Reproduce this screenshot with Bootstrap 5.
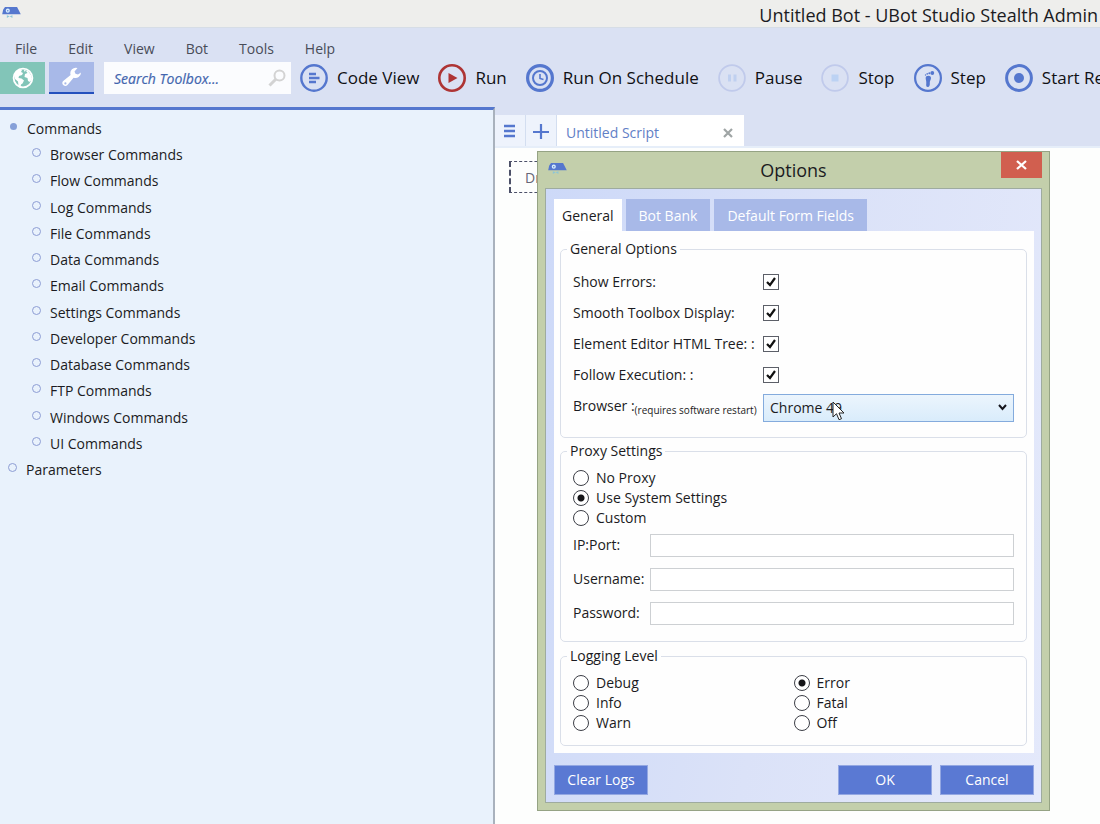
<!DOCTYPE html>
<html lang="en">
<head>
<meta charset="utf-8">
<meta name="viewport" content="width=device-width, initial-scale=1">
<title>Untitled Bot - UBot Studio Stealth Admin</title>
<link rel="stylesheet" href="https://cdn.jsdelivr.net/npm/bootstrap@5.3.0/dist/css/bootstrap.min.css">
<style>
:root { --blue: #5577ce; --soft: #a8b9e8; --green: #c3cfab; }
body { font-family: "Open Sans", "Noto Sans", sans-serif; font-size: 14px; line-height: 20px; color: #1b1b22; background: #fdfefd; }
button { border: 0; padding: 0; background: none; color: inherit; }
svg { display: block; flex: none; }
.titlebar { height: 28px; background: #eeeeec; border-bottom: 1px solid #d6dde6; padding-right: 2px; }
.titlebar h1 { font-size: 18px; line-height: 30px; margin: 0; }
.topbar { background: #dae1f3; }
.menus { padding: 11px 15px 3px; gap: 31px; color: #484c58; }
.tools { height: 45px; padding-bottom: 13px; }
.mode-btn { width: 45px; height: 32px; }
.mode-globe { background: #82c5b8; }
.mode-wrench { background: var(--soft); border-bottom: 2px solid #2450bd; margin-left: 4px; }
.searchbox { width: 187px; height: 32px; margin: 0 9px 0 10px; background: #fbfcfe; padding: 0 5px 0 10px; }
.searchbox input { border: 0; background: none; width: 100%; min-width: 0; padding: 2px 0 0; font-style: italic; outline: 0; }
.searchbox input::placeholder { color: #4265ae; opacity: 1; -webkit-text-stroke: .2px #4265ae; }
.actions { gap: 19px; font-size: 17px; color: #101014; }
.actions button { gap: 9px; height: 32px; }
.toolbox { width: 45%; background: #e9f2fc; border-top: 3px solid var(--blue); border-right: 2px solid #a9b2bd; padding: 6px 0 0 8px; }
.tree ul, .tree { list-style: none; margin: 0; padding: 0; }
.tree .kids { display: grid; grid-auto-rows: 1fr; height: 315px; padding-left: 24px; }
.tree a { color: #1b1b22; text-decoration: none; line-height: 26px; display: flex; gap: 8px; }
.dot { width: 9px; height: 9px; border: 1px solid #8d9dd4; border-radius: 50%; margin: 6px 1px 0 0; }
.dot-open { width: 7px; height: 7px; margin: 7px 2px 0; border: 0; background: #86a0d8; }
.tabstrip { background: #dae1f3; padding-top: 8px; border-bottom: 2px solid #e6eef9; }
.tab-mini { width: 31px; height: 31px; background: #eef3fc; border-right: 1px solid #d3def0; }
.tab-doc { width: 187px; height: 31px; background: #fff; color: #6280c6; padding: 4px 11px 0 9px; }
.dropzone { width: 120px; height: 32px; border: 2px dashed #4c5068; border-width: 1px 1px 1px 2px; margin: 13px 14px; padding: 6px 14px; color: #667; }
.dialog-win { position: absolute; left: 537px; top: 151px; width: 513px; background: var(--green); border: 1px solid #95a384; padding: 0 7px 7px; }
.dialog-head { height: 36px; position: relative; }
.dialog-head h2 { font-size: 18px; line-height: 37px; margin: 0; }
.dialog-icon { position: absolute; left: 3px; top: 10px; }
.close-btn { position: absolute; right: 0; top: 0; width: 41px; height: 26px; background: #d15f4f; }
.dialog-main { border: 1px solid #9eab9f; background: linear-gradient(100deg, #cdd9f8, #dbe2f8 50%, #e4e9fb); padding: 10px 7px 7px 8px; }
.opt-tabs { gap: 4px; }
.opt-tabs button { height: 32px; background: var(--soft); color: #fff; padding: 2px 13px 0; }
.opt-tabs button.active { background: #fff; color: #1b1b22; padding: 2px 8px 0; }
.opt-panel { background: #fefefe; padding: 7px 7px 7px 6px; }
fieldset { border: 1px solid #dadfe9; border-radius: 5px; padding: 6px 12px 11px; }
.fs-proxy { margin-top: 2px; }
.fs-log { margin-top: 3px; padding-bottom: 12px; }
legend { float: none; width: auto; font-size: 14px; line-height: 22px; margin: 0 0 0 -6px; padding: 0 3px; }
.opt-row { display: grid; grid-template-columns: 190px 1fr; height: 31px; align-items: center; }
.opt-row.opt-browser { height: 36px; }
.opt-row small { font-size: 10px; vertical-align: -3px; }
input[type=checkbox] { appearance: none; width: 16px; height: 16px; margin: 0; border: 1px solid #5c5f68; background: #fff url("data:image/svg+xml,%3Csvg xmlns='http://www.w3.org/2000/svg' viewBox='0 0 14 14'%3E%3Cpath d='M3 7l3 3 5-7' fill='none' stroke='%23111' stroke-width='2.2'/%3E%3C/svg%3E") center/14px; }
input[type=radio] { appearance: none; width: 16px; height: 16px; margin: 0 7px 0 0; border: 1px solid #3c3e46; border-radius: 50%; background: #fff; }
input[type=radio]:checked { background: radial-gradient(circle, #151518 3px, #fff 4px); }
.choice { display: flex; align-items: center; height: 20px; }
.picker { position: relative; }
.picker select { display: block; width: 100%; height: 28px; appearance: none; border: 1px solid #84abdd; border-radius: 0; padding: 0 6px; color: #1b1b22; background: linear-gradient(#ecf5fd, #d9ecfb); }
.picker .chev { position: absolute; right: 7px; top: 10px; pointer-events: none; }
.picker .pointer { position: absolute; left: 69px; top: 7px; pointer-events: none; }
.cred { display: grid; grid-template-columns: 77px 1fr; height: 34px; align-items: center; }
.cred input { height: 23px; min-width: 0; border: 1px solid #cdd0d3; background: #fff; border-radius: 0; }
.cmd-btn { width: 94px; height: 30px; background: #5a79d3; border: 1px solid #93a7e2; color: #fff; }
</style>
</head>
<body class="vh-100 d-flex flex-column overflow-hidden">
<svg width="0" height="0" class="position-absolute" aria-hidden="true">
  <symbol id="bot" viewBox="0 0 20 14"><path d="M3 1h13l4 8H0l1-5z" fill="#5577ce"/><circle cx="6" cy="5" r="2.2" fill="#d9efff"/><circle cx="6" cy="5" r=".8" fill="#5577ce"/><path d="M5 10v3l3-2 3 2v-3l-3 1z" fill="#8cc6d8"/></symbol>
</svg>
<header>
  <div class="titlebar d-flex justify-content-between">
    <svg width="22" height="16" class="mt-1"><use href="#bot" x="2" y="2" width="19" height="13"/></svg>
    <h1 class="fw-normal text-nowrap">Untitled Bot - UBot Studio Stealth Admin</h1>
  </div>
  <div class="topbar">
    <nav class="menus d-flex" aria-label="Main menu">
      <button>File</button><button>Edit</button><button>View</button><button>Bot</button><button>Tools</button><button>Help</button>
    </nav>
    <div class="tools d-flex overflow-hidden">
      <button class="mode-btn mode-globe d-flex align-items-center justify-content-center flex-shrink-0" aria-label="Browser">
        <svg width="22" height="22" viewBox="0 0 22 22"><circle cx="11" cy="11" r="9.4" fill="none" stroke="#fff" stroke-width="1.8"/><path d="M2 8c1-3 3-5 6-6l2 1-1 2 2 1-1 2-3 1-.5 2 3 .5 2.500 2-1.500 3-1.500 1-.5 3-2-2-.5-4L3 12zM12 3l4 1 3 4 1 4-2 3-2-1-.5-3-3-1 .5-3 2.500-1-1.500-2-2 .5z" fill="#fff"/></svg>
      </button>
      <button class="mode-btn mode-wrench d-flex align-items-center justify-content-center flex-shrink-0" aria-label="Toolbox">
        <svg width="20" height="20" viewBox="0 0 20 20"><path d="M19 5.500a5.500 5.500 0 0 1-7.400 5.200L5.500 18a3 3 0 0 1-4.600-3.800l7.700-6.300A5.500 5.500 0 0 1 15.500 1l-3 3.500 1 2.200 2.500.7z" fill="#fff"/><circle cx="3.400" cy="16.400" r="1.100" fill="#a8b9e8"/></svg>
      </button>
      <div class="searchbox d-flex align-items-center flex-shrink-0">
        <input type="text" placeholder="Search Toolbox..." aria-label="Search Toolbox">
        <svg width="18" height="18" viewBox="0 0 18 18" fill="none" stroke="#d3d3d3"><circle cx="11.500" cy="6.500" r="5" stroke-width="2"/><path d="M8 10l-6.500 6.500" stroke-width="3"/></svg>
      </div>
      <div class="actions d-flex text-nowrap">
        <button class="d-flex align-items-center"><svg width="28" height="28" viewBox="0 0 28 28" fill="none" stroke="#5577ce" stroke-width="2.400"><circle cx="14" cy="14" r="12.700"/><path d="M9 10h7M9 14h10.500M9 18h7"/></svg>Code View</button>
        <button class="d-flex align-items-center"><svg width="28" height="28" viewBox="0 0 28 28"><circle cx="14" cy="14" r="12.700" fill="none" stroke="#ae3434" stroke-width="2.600"/><path d="M10.500 9l9 5-9 5z" fill="#ae3434"/></svg>Run</button>
        <button class="d-flex align-items-center"><svg width="28" height="28" viewBox="0 0 28 28" fill="none" stroke="#5577ce"><circle cx="14" cy="14" r="12.400" stroke-width="3.200"/><circle cx="14" cy="14" r="7" stroke-width="2"/><path d="M14 10v4.500l3.500 1" stroke-width="1.600"/></svg>Run On Schedule</button>
        <button class="d-flex align-items-center"><svg width="28" height="28" viewBox="0 0 28 28"><circle cx="14" cy="14" r="12.900" fill="none" stroke="#c0caeb" stroke-width="1.800"/><path d="M10 10.500h3v7h-3zM15.500 10.500h3v7h-3z" fill="#bfd0f0"/></svg>Pause</button>
        <button class="d-flex align-items-center"><svg width="28" height="28" viewBox="0 0 28 28"><circle cx="14" cy="14" r="12.900" fill="none" stroke="#c0caeb" stroke-width="1.800"/><path d="M10.500 10.500h7v7h-7z" fill="#bcd2f3"/></svg>Stop</button>
        <button class="d-flex align-items-center"><svg width="28" height="28" viewBox="0 0 28 28"><circle cx="14" cy="14" r="12.900" fill="none" stroke="#5577ce" stroke-width="2.200"/><path d="M12 12.500c2-1.500 5-1 5 1.500 0 2-1.500 3-1.200 5 .2 2-.3 4-2 4s-1.800-1.500-1.500-4c.2-3-1.300-4.500-.3-6.500z" fill="#5577ce"/><g fill="#5577ce"><circle cx="18.300" cy="9" r="1.900"/><circle cx="15.300" cy="9.200" r="1"/><circle cx="13.200" cy="9.900" r=".8"/><circle cx="11.500" cy="11" r=".7"/></g></svg>Step</button>
        <button class="d-flex align-items-center"><svg width="28" height="28" viewBox="0 0 28 28"><circle cx="14" cy="14" r="12.400" fill="none" stroke="#5577ce" stroke-width="3"/><circle cx="14" cy="14" r="5" fill="#5577ce"/></svg>Start Recording</button>
      </div>
    </div>
  </div>
</header>

<main class="d-flex flex-grow-1">
  <aside class="toolbox flex-shrink-0">
    <ul class="tree">
      <li><a href="#"><span class="dot dot-open"></span>Commands</a>
        <ul class="kids">
          <li><a href="#"><span class="dot"></span>Browser Commands</a></li>
          <li><a href="#"><span class="dot"></span>Flow Commands</a></li>
          <li><a href="#"><span class="dot"></span>Log Commands</a></li>
          <li><a href="#"><span class="dot"></span>File Commands</a></li>
          <li><a href="#"><span class="dot"></span>Data Commands</a></li>
          <li><a href="#"><span class="dot"></span>Email Commands</a></li>
          <li><a href="#"><span class="dot"></span>Settings Commands</a></li>
          <li><a href="#"><span class="dot"></span>Developer Commands</a></li>
          <li><a href="#"><span class="dot"></span>Database Commands</a></li>
          <li><a href="#"><span class="dot"></span>FTP Commands</a></li>
          <li><a href="#"><span class="dot"></span>Windows Commands</a></li>
          <li><a href="#"><span class="dot"></span>UI Commands</a></li>
        </ul>
      </li>
      <li><a href="#"><span class="dot"></span>Parameters</a></li>
    </ul>
  </aside>
  <section class="flex-grow-1">
    <div class="tabstrip d-flex">
      <button class="tab-mini d-flex align-items-center justify-content-center" aria-label="Script list"><svg width="12" height="14" viewBox="0 0 12 14" stroke="#5577ce" stroke-width="2.500"><path d="M0 2h11M0 7h11M0 12h11"/></svg></button>
      <button class="tab-mini d-flex align-items-center justify-content-center" aria-label="New script"><svg width="16" height="16" viewBox="0 0 16 16" stroke="#5577ce" stroke-width="2.200"><path d="M0 9h16M8 1v15"/></svg></button>
      <div class="tab-doc d-flex align-items-center justify-content-between"><span>Untitled Script</span>
        <button aria-label="Close tab"><svg width="10" height="10" viewBox="0 0 10 10" stroke="#9fa5a5" stroke-width="2.200"><path d="M1 1l8 8M9 1L1 9"/></svg></button></div>
    </div>
    <div class="dropzone text-nowrap overflow-hidden">Drag Here</div>
  </section>
</main>

<div class="dialog-win" role="dialog" aria-labelledby="dlg-title">
  <div class="dialog-head text-center">
    <svg class="dialog-icon" width="19" height="13"><use href="#bot" width="19" height="13"/></svg>
    <h2 id="dlg-title" class="fw-normal">Options</h2>
    <button class="close-btn d-flex align-items-center justify-content-center" aria-label="Close"><svg width="11" height="10" viewBox="0 0 11 10" stroke="#fff" stroke-width="2.300"><path d="M1 1l9 8M10 1L1 9"/></svg></button>
  </div>
  <div class="dialog-main">
    <div class="opt-tabs d-flex" role="tablist">
      <button class="active" role="tab" aria-selected="true">General</button>
      <button role="tab">Bot Bank</button>
      <button role="tab">Default Form Fields</button>
    </div>
    <div class="opt-panel">
      <fieldset>
        <legend>General Options</legend>
        <div class="opt-row"><label for="o1">Show Errors:</label><input type="checkbox" id="o1" checked></div>
        <div class="opt-row"><label for="o2">Smooth Toolbox Display:</label><input type="checkbox" id="o2" checked></div>
        <div class="opt-row"><label for="o3">Element Editor HTML Tree: :</label><input type="checkbox" id="o3" checked></div>
        <div class="opt-row"><label for="o4">Follow Execution: :</label><input type="checkbox" id="o4" checked></div>
        <div class="opt-row opt-browser"><label for="o5" class="text-nowrap">Browser :<small>(requires software restart)</small></label>
          <div class="picker"><select id="o5"><option>Chrome 49</option></select>
            <svg class="chev" width="9" height="7" viewBox="0 0 9 7" fill="none" stroke="#15151c" stroke-width="2"><path d="M1 1l3.500 4L8 1"/></svg>
            <svg class="pointer" width="13" height="20" viewBox="0 0 13 20"><path d="M1 1v15l3.500-3.300 2.500 6 2.500-1-2.500-5.700H12z" fill="#fff" stroke="#222"/></svg>
          </div></div>
      </fieldset>
      <fieldset class="fs-proxy">
        <legend>Proxy Settings</legend>
        <label class="choice"><input type="radio" name="proxy">No Proxy</label>
        <label class="choice"><input type="radio" name="proxy" checked>Use System Settings</label>
        <label class="choice"><input type="radio" name="proxy">Custom</label>
        <div class="cred"><label for="ip">IP:Port:</label><input type="text" id="ip"></div>
        <div class="cred"><label for="user">Username:</label><input type="text" id="user"></div>
        <div class="cred"><label for="pass">Password:</label><input type="password" id="pass"></div>
      </fieldset>
      <fieldset class="fs-log">
        <legend>Logging Level</legend>
        <div class="row g-0">
          <div class="col-6">
            <label class="choice"><input type="radio" name="log">Debug</label>
            <label class="choice"><input type="radio" name="log">Info</label>
            <label class="choice"><input type="radio" name="log">Warn</label>
          </div>
          <div class="col-6">
            <label class="choice"><input type="radio" name="log" checked>Error</label>
            <label class="choice"><input type="radio" name="log">Fatal</label>
            <label class="choice"><input type="radio" name="log">Off</label>
          </div>
        </div>
      </fieldset>
    </div>
    <div class="d-flex pt-2 mt-1">
      <button class="cmd-btn me-auto">Clear Logs</button>
      <button class="cmd-btn me-2">OK</button>
      <button class="cmd-btn">Cancel</button>
    </div>
  </div>
</div>
<script src="https://cdn.jsdelivr.net/npm/bootstrap@5.3.0/dist/js/bootstrap.bundle.min.js"></script>
</body>
</html>
